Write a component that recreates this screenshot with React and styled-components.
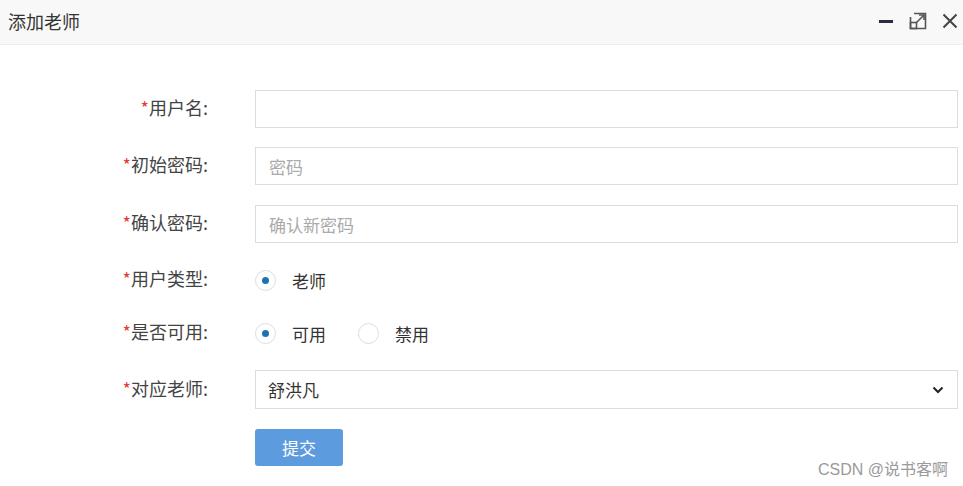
import React from 'react';
import styled, { createGlobalStyle } from 'styled-components';

const Global = createGlobalStyle`
    body {
        margin: 0;
        background: #fff;
        font-family: "Noto Sans CJK SC", "Noto Sans", sans-serif;
    }
`

const App = () => {
    return (
        <Dialog>
            <Global />
            <Header>
                <Title>添加老师</Title>
                <Tools>
                    <ToolBtn>
                        <svg width="16" height="16" viewBox="0 0 16 16">
                            <rect x="1" y="7" width="14" height="3" fill="#2b2d3f" />
                        </svg>
                    </ToolBtn>
                    <ToolBtn>
                        <svg width="20" height="20" viewBox="0 0 20 20" fill="none" stroke="#555" strokeWidth="1.6">
                            <path d="M6 2.5 H17.5 V17.5 H2.5 V6" />
                            <rect x="2.5" y="11.5" width="6" height="6" />
                            <path d="M8.5 11.5 L16 4" />
                            <path d="M11 4 H16 V9" />
                        </svg>
                    </ToolBtn>
                    <ToolBtn>
                        <svg width="16" height="16" viewBox="0 0 16 16" fill="none" stroke="#444" strokeWidth="2">
                            <path d="M1.5 1.5 L14.5 14.5 M14.5 1.5 L1.5 14.5" />
                        </svg>
                    </ToolBtn>
                </Tools>
            </Header>

            <Form>
                <Row $mb={19}>
                    <Label><Star>*</Star>用户名:</Label>
                    <Input />
                </Row>
                <Row $mb={20}>
                    <Label><Star>*</Star>初始密码:</Label>
                    <Input placeholder="密码" />
                </Row>
                <Row $mb={18}>
                    <Label><Star>*</Star>确认密码:</Label>
                    <Input placeholder="确认新密码" />
                </Row>
                <Row $mb={15}>
                    <Label><Star>*</Star>用户类型:</Label>
                    <Radios>
                        <Option><Radio $on /> 老师</Option>
                    </Radios>
                </Row>
                <Row $mb={18}>
                    <Label><Star>*</Star>是否可用:</Label>
                    <Radios>
                        <Option><Radio $on /> 可用</Option>
                        <Option><Radio /> 禁用</Option>
                    </Radios>
                </Row>
                <Row $mb={20} $h={39}>
                    <Label><Star>*</Star>对应老师:</Label>
                    <Select>
                        <span>舒洪凡</span>
                        <svg width="12" height="8" viewBox="0 0 12 8" fill="none" stroke="#222" strokeWidth="2">
                            <path d="M1.5 1.5 L6 6 L10.5 1.5" />
                        </svg>
                    </Select>
                </Row>
                <Row $h={37}>
                    <Label />
                    <Button>提交</Button>
                </Row>
            </Form>

            <Mark>CSDN @说书客啊</Mark>
        </Dialog>
    );
}

const Dialog = styled.div`
    position: relative;
    width: 963px;
    height: 486px;
    overflow: hidden;
    background: #fff;
    color: #333;
`

const Header = styled.div`
    height: 45px;
    box-sizing: border-box;
    background: #f8f8f8;
    border-bottom: 1px solid #eee;
    display: flex;
    align-items: center;
    justify-content: space-between;
    padding: 0 5px 2px 8px;
`

const Title = styled.div`
    font-size: 18px;
    color: #333;
`

const Tools = styled.div`
    display: flex;
    align-items: center;
    gap: 14px;
`

const ToolBtn = styled.span`
    display: flex;
    align-items: center;
    cursor: pointer;
`

const Form = styled.div`
    padding: 45px 5px 0 0;
    display: flex;
    flex-direction: column;
`

const Row = styled.div`
    display: flex;
    align-items: center;
    height: ${({ $h }) => $h || 38}px;
    margin-bottom: ${({ $mb }) => $mb || 0}px;
`

const Label = styled.label`
    width: 208px;
    flex: none;
    text-align: right;
    font-size: 18px;
    color: #444;
    margin-right: 47px;
    padding-bottom: 4px;
`

const Star = styled.span`
    color: #e4393c;
`

const Input = styled.input`
    flex: 1;
    height: 38px;
    box-sizing: border-box;
    border: 1px solid #ddd;
    padding: 0 13px;
    font-size: 17px;
    font-family: inherit;
    color: #333;
    outline: none;

    &::placeholder {
        color: #aaa;
    }
`

const Radios = styled.div`
    display: flex;
    align-items: center;
    gap: 32px;
`

const Option = styled.span`
    display: flex;
    align-items: center;
    gap: 16px;
    font-size: 17px;
    color: #333;
`

const Radio = styled.span`
    width: 21px;
    height: 21px;
    box-sizing: border-box;
    border: 1px solid #ddd;
    border-radius: 50%;
    display: flex;
    align-items: center;
    justify-content: center;

    &::after {
        content: '';
        width: 7px;
        height: 7px;
        border-radius: 50%;
        background: ${({ $on }) => ($on ? '#1d73b0' : 'transparent')};
    }
`

const Select = styled.div`
    flex: 1;
    height: 39px;
    box-sizing: border-box;
    border: 1px solid #ddd;
    display: flex;
    align-items: center;
    justify-content: space-between;
    padding: 0 13px 0 12px;
    font-size: 17px;
    color: #333;
`

const Button = styled.button`
    width: 88px;
    height: 37px;
    border: none;
    border-radius: 3px;
    background: #5b9bde;
    color: #fff;
    font-size: 17px;
    font-family: inherit;
    cursor: pointer;
`

const Mark = styled.div`
    position: absolute;
    right: 15px;
    bottom: 6px;
    font-size: 16px;
    color: #9a9a9a;
    font-family: "Liberation Sans", "Noto Sans CJK SC", sans-serif;
`

export default App;
